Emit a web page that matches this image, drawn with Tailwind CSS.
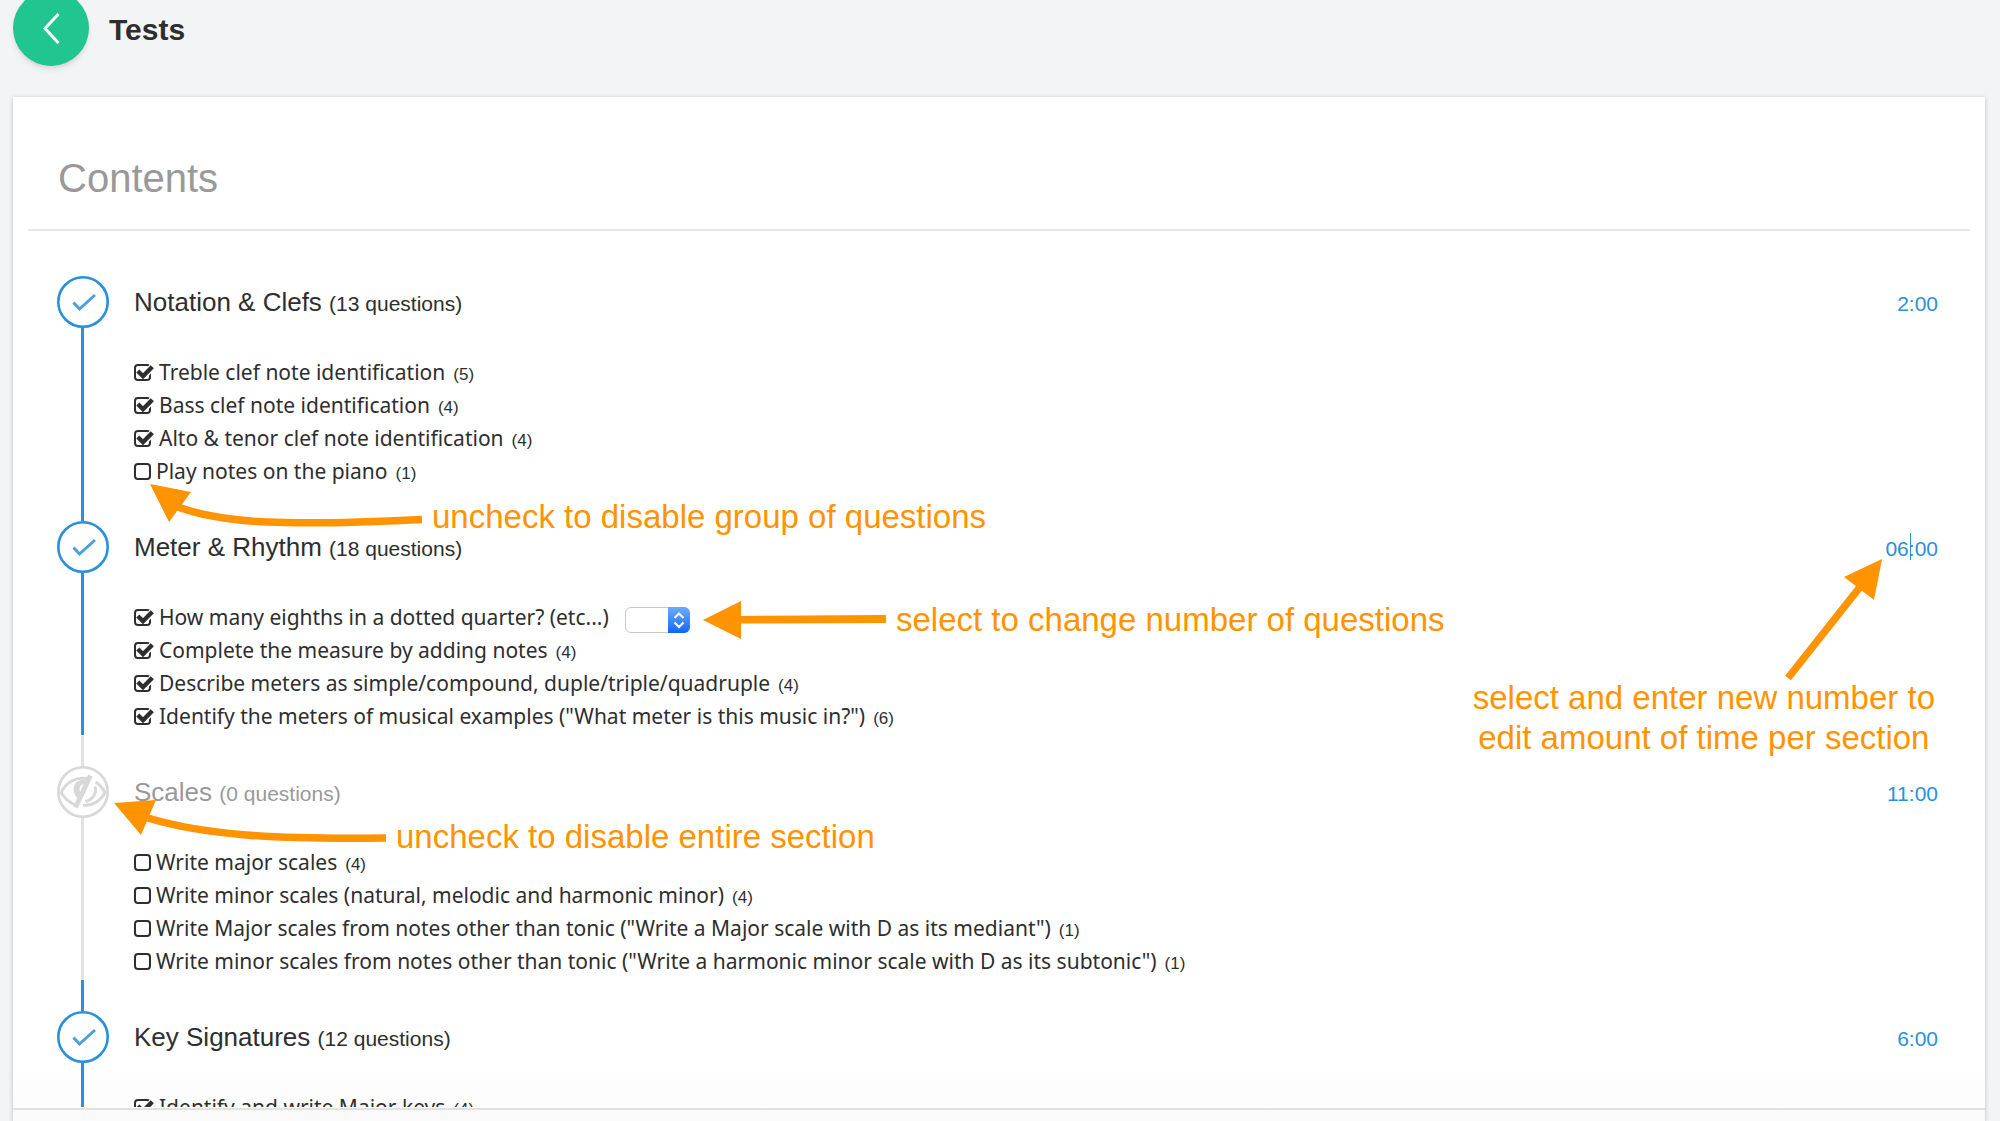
<!DOCTYPE html>
<html lang="en">
<head>
    <meta charset="UTF-8">
    <meta name="viewport" content="width=device-width, initial-scale=1.0">
    <title>Tests</title>
    <script src="https://cdn.jsdelivr.net/npm/@tailwindcss/browser@4"></script>
</head>

<body class="h-screen overflow-hidden flex flex-col bg-[#f3f4f6] text-[#2e2e2e] font-['Liberation_Sans',Arial,sans-serif]">
    <!-- shared icons -->
    <svg class="hidden">
        <symbol id="ring-check" viewBox="0 0 52 52"><g fill="none" stroke="#2a90dc"><circle cx="26" cy="26" r="24.7" stroke-width="2.6"/><path d="M16.5 26.5l6 6.5L38 19" stroke="#4a9fe0" stroke-width="3"/></g></symbol>
        <symbol id="tick" viewBox="0 0 20 18"><g fill="none"><path d="M11 10.500L19 2.500" stroke="#fff" stroke-width="7"/><path d="M3.800 7L9 12.200l9.300-9.500" stroke="#2e2e2e" stroke-width="4.400"/></g></symbol>
    </svg>

    <header class="flex items-start h-[97px] pl-[13px] shrink-0">
        <button type="button" aria-label="Back" class="-mt-[10px] size-[76px] rounded-full bg-[#20c58f] shadow-md flex items-center justify-center">
            <svg class="size-8" viewBox="0 0 32 32" fill="none" stroke="#fff" stroke-width="3"><path d="M23.500 2L10 16.500 23.500 31"/></svg>
        </button>
        <h1 class="ml-5 mt-3 text-[30px] leading-9 font-bold">Tests</h1>
    </header>

    <main class="flex-1 min-h-0 flex flex-col ml-[13px] mr-[15px] bg-white shadow-[0_1px_4px_rgba(0,0,0,0.25)]">
        <h2 class="mx-[15px] pl-[30px] pt-[57px] pb-[27px] text-[40px] leading-12 text-[#999] border-b-2 border-[#e5e6e6] shrink-0">Contents</h2>

        <div class="flex-1 min-h-0 overflow-hidden pt-[14px] pl-11 pr-[47px] bg-linear-to-b from-white from-95% to-[#fcfcfc]">
            <!-- Notation & Clefs -->
            <section class="relative flex gap-[25px] h-[245px]">
                <div class="flex flex-col items-center w-[52px]">
                    <div class="h-[31px] shrink-0"></div>
                    <button type="button" aria-label="Disable Notation &amp; Clefs" class="size-[52px] shrink-0"><svg class="size-[52px]"><use href="#ring-check"/></svg></button>
                    <div class="w-[3px] mr-px flex-1 bg-[#2a90dc]"></div>
                </div>
                <div class="flex-1 pt-[31px]">
                    <div class="flex items-baseline justify-between h-[52px] leading-[52px]">
                        <h3 class="text-[26px]">Notation &amp; Clefs <span class="text-[21px]">(13 questions)</span></h3>
                        <input type="text" aria-label="Time for Notation &amp; Clefs" value="2:00" class="w-20 text-right text-[21px] text-[#2a90dc]">
                    </div>
                    <ul class="mt-7 text-[21px] font-['Noto_Sans',sans-serif]">
                        <li><label class="relative flex items-center h-[33px]"><input type="checkbox" checked class="peer appearance-none size-[17px] mr-2 rounded-[4px] border-2 border-[#2e2e2e]"><svg class="absolute left-0 w-5 h-[18px] hidden peer-checked:block"><use href="#tick"/></svg>Treble clef note identification <span class="ml-2 pt-1 text-[17px] font-['Liberation_Sans']">(5)</span></label></li>
                        <li><label class="relative flex items-center h-[33px]"><input type="checkbox" checked class="peer appearance-none size-[17px] mr-2 rounded-[4px] border-2 border-[#2e2e2e]"><svg class="absolute left-0 w-5 h-[18px] hidden peer-checked:block"><use href="#tick"/></svg>Bass clef note identification <span class="ml-2 pt-1 text-[17px] font-['Liberation_Sans']">(4)</span></label></li>
                        <li><label class="relative flex items-center h-[33px]"><input type="checkbox" checked class="peer appearance-none size-[17px] mr-2 rounded-[4px] border-2 border-[#2e2e2e]"><svg class="absolute left-0 w-5 h-[18px] hidden peer-checked:block"><use href="#tick"/></svg>Alto &amp; tenor clef note identification <span class="ml-2 pt-1 text-[17px] font-['Liberation_Sans']">(4)</span></label></li>
                        <li><label class="relative flex items-center h-[33px]"><input type="checkbox" class="peer appearance-none size-[17px] mr-[5px] rounded-[4px] border-2 border-[#2e2e2e]"><svg class="absolute left-0 w-5 h-[18px] hidden peer-checked:block"><use href="#tick"/></svg>Play notes on the piano <span class="ml-2 pt-1 text-[17px] font-['Liberation_Sans']">(1)</span></label></li>
                    </ul>
                </div>
                <div class="absolute z-10 left-[93px] top-[239px] flex whitespace-nowrap text-[33px] leading-10 text-[#ff9300]">
                    <svg class="w-[272px] h-[43px]" viewBox="0 0 272 43"><path d="M0 0l41 8-22 30z" fill="#ff9300"/><path d="M28 23C74 40 140 42 272 35.500" fill="none" stroke="#ff9300" stroke-width="7.5"/></svg>
                    <p class="ml-[10px] mt-[13px]">uncheck to disable group of questions</p>
                </div>
            </section>

            <!-- Meter & Rhythm -->
            <section class="relative flex gap-[25px] h-[245px]">
                <div class="flex flex-col items-center w-[52px]">
                    <div class="w-[3px] mr-px h-[31px] shrink-0 bg-[#2a90dc]"></div>
                    <button type="button" aria-label="Disable Meter &amp; Rhythm" class="size-[52px] shrink-0"><svg class="size-[52px]"><use href="#ring-check"/></svg></button>
                    <div class="w-[3px] mr-px flex-1 bg-[#2a90dc]"></div>
                </div>
                <div class="flex-1 pt-[31px]">
                    <div class="relative flex items-baseline justify-between h-[52px] leading-[52px]">
                        <h3 class="text-[26px]">Meter &amp; Rhythm <span class="text-[21px]">(18 questions)</span></h3>
                        <input type="text" aria-label="Time for Meter &amp; Rhythm" value="06:00" class="w-20 text-right text-[21px] text-[#2a90dc]">
                        <!-- text cursor -->
                        <span class="absolute right-[27px] top-3 w-px h-[27px] bg-[#2a90dc]"></span>
                    </div>
                    <ul class="mt-7 text-[21px] font-['Noto_Sans',sans-serif]">
                        <li class="flex items-center h-[33px]">
                            <label class="relative flex items-center h-[33px]"><input type="checkbox" checked class="peer appearance-none size-[17px] mr-2 rounded-[4px] border-2 border-[#2e2e2e]"><svg class="absolute left-0 w-5 h-[18px] hidden peer-checked:block"><use href="#tick"/></svg>How many eighths in a dotted quarter? (etc...)</label>
                            <span class="relative ml-4 pt-1">
                                <select aria-label="Number of questions" class="block appearance-none w-[65px] h-[26px] rounded-md border border-[#c8c8c8] bg-white text-sm"><option></option><option>4</option></select>
                                <svg class="absolute right-0 bottom-0 w-[22px] h-[26px] rounded-r-md bg-linear-to-b from-[#6caafb] to-[#0a66fd] pointer-events-none" viewBox="0 0 22 26" fill="none" stroke="#fff" stroke-width="2"><path d="M6.500 11L11 6.500 15.500 11M6.500 15.500L11 20l4.500-4.500"/></svg>
                            </span>
                        </li>
                        <li><label class="relative flex items-center h-[33px]"><input type="checkbox" checked class="peer appearance-none size-[17px] mr-2 rounded-[4px] border-2 border-[#2e2e2e]"><svg class="absolute left-0 w-5 h-[18px] hidden peer-checked:block"><use href="#tick"/></svg>Complete the measure by adding notes <span class="ml-2 pt-1 text-[17px] font-['Liberation_Sans']">(4)</span></label></li>
                        <li><label class="relative flex items-center h-[33px]"><input type="checkbox" checked class="peer appearance-none size-[17px] mr-2 rounded-[4px] border-2 border-[#2e2e2e]"><svg class="absolute left-0 w-5 h-[18px] hidden peer-checked:block"><use href="#tick"/></svg>Describe meters as simple/compound, duple/triple/quadruple <span class="ml-2 pt-1 text-[17px] font-['Liberation_Sans']">(4)</span></label></li>
                        <li><label class="relative flex items-center h-[33px]"><input type="checkbox" checked class="peer appearance-none size-[17px] mr-2 rounded-[4px] border-2 border-[#2e2e2e]"><svg class="absolute left-0 w-5 h-[18px] hidden peer-checked:block"><use href="#tick"/></svg>Identify the meters of musical examples ("What meter is this music in?") <span class="ml-2 pt-1 text-[17px] font-['Liberation_Sans']">(6)</span></label></li>
                    </ul>
                </div>
                <div class="absolute z-10 left-[646px] top-[110px] flex whitespace-nowrap text-[33px] leading-10 text-[#ff9300]">
                    <svg class="w-[183px] h-10" viewBox="0 0 183 40" fill="#ff9300"><path d="M0 20L38 1v15l145-1v8l-145 .5V39z"/></svg>
                    <p class="ml-[10px]">select to change number of questions</p>
                </div>
                <div class="absolute z-10 right-[3px] top-[68px] flex flex-col items-end whitespace-nowrap text-[33px] leading-10 text-[#ff9300]">
                    <svg class="w-[100px] h-[120px] mr-[51px] overflow-visible" viewBox="0 0 100 120"><path d="M98 1L60 19l30 23z" fill="#ff9300"/><path d="M76 29L4 120" stroke="#ff9300" stroke-width="7.5"/></svg>
                    <p class="text-center">select and enter new number to<br>edit amount of time per section</p>
                </div>
            </section>

            <!-- Scales (disabled) -->
            <section class="relative flex gap-[25px] h-[245px]">
                <div class="flex flex-col items-center w-[52px]">
                    <div class="w-[3px] mr-px h-[31px] shrink-0 bg-[#e2e2e2]"></div>
                    <button type="button" aria-label="Enable Scales" class="size-[52px] shrink-0">
                        <svg class="size-[52px]" viewBox="0 0 52 52" fill="none" stroke="#d8d8d8">
                            <circle cx="26" cy="26" r="24.7" stroke-width="2.6"/>
                            <path d="M31 12.500C18 10.500 9 17.500 4 26.500c4 6.500 8.500 10 14.500 12.500" stroke-width="3"/>
                            <path d="M30 14C18 11.500 12 22 21 33l3-6c-3-4-1-9 4-9z" fill="#d8d8d8" stroke="none"/>
                            <path d="M33.500 9.500L18.500 41.500" stroke-width="5"/>
                            <path d="M38.500 16c4 2.500 7 6 9.500 10.500-4.500 8.500-12 13-22 13M38 20.500c2 7-2 13-9.500 15" stroke-width="3"/>
                        </svg>
                    </button>
                    <div class="w-[3px] mr-px flex-1 bg-[#e2e2e2]"></div>
                </div>
                <div class="flex-1 pt-[31px]">
                    <div class="flex items-baseline justify-between h-[52px] leading-[52px]">
                        <h3 class="text-[26px] text-[#999]">Scales <span class="text-[21px]">(0 questions)</span></h3>
                        <input type="text" aria-label="Time for Scales" value="11:00" class="w-20 text-right text-[21px] text-[#2a90dc]">
                    </div>
                    <ul class="mt-7 text-[21px] font-['Noto_Sans',sans-serif]">
                        <li><label class="relative flex items-center h-[33px]"><input type="checkbox" class="peer appearance-none size-[17px] mr-[5px] rounded-[4px] border-2 border-[#2e2e2e]"><svg class="absolute left-0 w-5 h-[18px] hidden peer-checked:block"><use href="#tick"/></svg>Write major scales <span class="ml-2 pt-1 text-[17px] font-['Liberation_Sans']">(4)</span></label></li>
                        <li><label class="relative flex items-center h-[33px]"><input type="checkbox" class="peer appearance-none size-[17px] mr-[5px] rounded-[4px] border-2 border-[#2e2e2e]"><svg class="absolute left-0 w-5 h-[18px] hidden peer-checked:block"><use href="#tick"/></svg>Write minor scales (natural, melodic and harmonic minor) <span class="ml-2 pt-1 text-[17px] font-['Liberation_Sans']">(4)</span></label></li>
                        <li><label class="relative flex items-center h-[33px]"><input type="checkbox" class="peer appearance-none size-[17px] mr-[5px] rounded-[4px] border-2 border-[#2e2e2e]"><svg class="absolute left-0 w-5 h-[18px] hidden peer-checked:block"><use href="#tick"/></svg>Write Major scales from notes other than tonic ("Write a Major scale with D as its mediant") <span class="ml-2 pt-1 text-[17px] font-['Liberation_Sans']">(1)</span></label></li>
                        <li><label class="relative flex items-center h-[33px]"><input type="checkbox" class="peer appearance-none size-[17px] mr-[5px] rounded-[4px] border-2 border-[#2e2e2e]"><svg class="absolute left-0 w-5 h-[18px] hidden peer-checked:block"><use href="#tick"/></svg>Write minor scales from notes other than tonic ("Write a harmonic minor scale with D as its subtonic") <span class="ml-2 pt-1 text-[17px] font-['Liberation_Sans']">(1)</span></label></li>
                    </ul>
                </div>
                <div class="absolute z-10 left-[57px] top-[65px] flex whitespace-nowrap text-[33px] leading-10 text-[#ff9300]">
                    <svg class="w-[272px] h-[43px]" viewBox="0 0 272 43"><path d="M0 3L42 0 27 35z" fill="#ff9300"/><path d="M34 18C90 35 160 39.500 272 38" fill="none" stroke="#ff9300" stroke-width="7.5"/></svg>
                    <p class="ml-[10px] mt-[17px]">uncheck to disable entire section</p>
                </div>
            </section>

            <!-- Key Signatures -->
            <section class="relative flex gap-[25px] h-[245px]">
                <div class="flex flex-col items-center w-[52px]">
                    <div class="w-[3px] mr-px h-[31px] shrink-0 bg-[#2a90dc]"></div>
                    <button type="button" aria-label="Disable Key Signatures" class="size-[52px] shrink-0"><svg class="size-[52px]"><use href="#ring-check"/></svg></button>
                    <div class="w-[3px] mr-px flex-1 bg-[#2a90dc]"></div>
                </div>
                <div class="flex-1 pt-[31px]">
                    <div class="flex items-baseline justify-between h-[52px] leading-[52px]">
                        <h3 class="text-[26px]">Key Signatures <span class="text-[21px]">(12 questions)</span></h3>
                        <input type="text" aria-label="Time for Key Signatures" value="6:00" class="w-20 text-right text-[21px] text-[#2a90dc]">
                    </div>
                    <ul class="mt-7 text-[21px] font-['Noto_Sans',sans-serif]">
                        <li><label class="relative flex items-center h-[33px]"><input type="checkbox" checked class="peer appearance-none size-[17px] mr-2 rounded-[4px] border-2 border-[#2e2e2e]"><svg class="absolute left-0 w-5 h-[18px] hidden peer-checked:block"><use href="#tick"/></svg>Identify and write Major keys <span class="ml-2 pt-1 text-[17px] font-['Liberation_Sans']">(4)</span></label></li>
                    </ul>
                </div>
            </section>
        </div>
        <footer class="mt-px h-[13px] shrink-0 border-t-2 border-[#e0e2e2] bg-[#fafafa]"></footer>
    </main>
</body>
</html>
